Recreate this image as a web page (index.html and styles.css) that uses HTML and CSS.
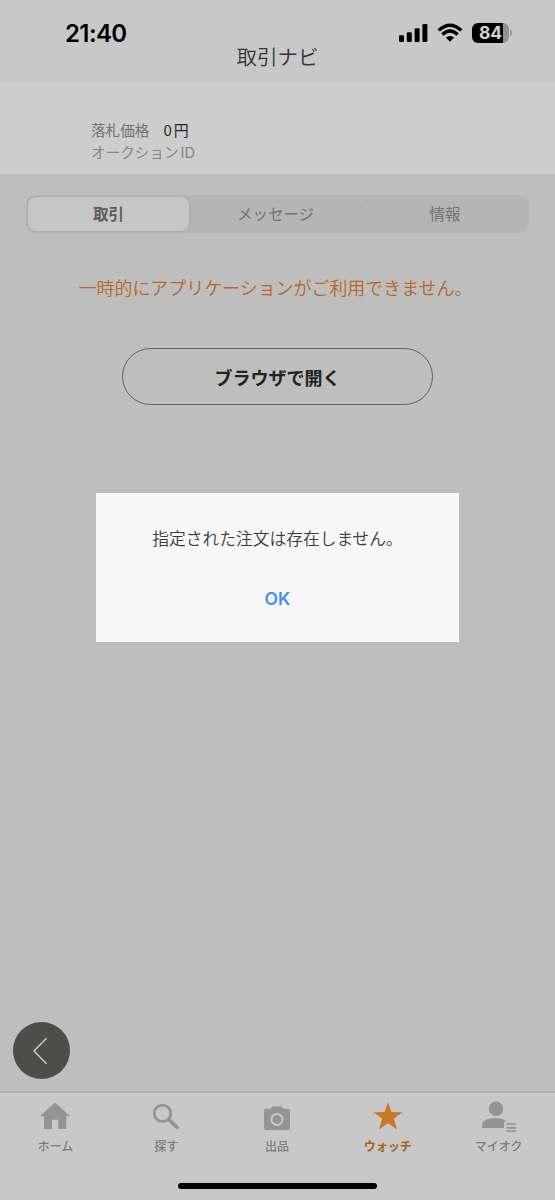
FILE: index.html
```html
<!DOCTYPE html>
<html lang="ja">
<head>
    <meta charset="UTF-8">
    <meta name="viewport" content="width=device-width, initial-scale=1.0">
    <title>取引ナビ</title>
    <link rel="stylesheet" href="styles.css">
</head>
<body>
    <header class="header">
        <div class="status-bar">
            <span class="time">21:40</span>
            <div class="status-icons">
                <svg class="signal" width="29" height="18" viewBox="0 0 29 18">
                    <rect x="0" y="11.3" width="5" height="6.7" rx="1.3"/>
                    <rect x="7.8" y="8.3" width="5" height="9.7" rx="1.3"/>
                    <rect x="15.6" y="4.3" width="5" height="13.7" rx="1.3"/>
                    <rect x="23.4" y="0" width="5" height="18" rx="1.3"/>
                </svg>
                <svg class="wifi" width="26" height="19" viewBox="0 0 26 19">
                    <path d="M1.6 7.4 Q13 -3.1 24.4 7.4" fill="none" stroke="#000" stroke-width="3.3"/>
                    <path d="M5.4 11.5 Q13 4.4 20.6 11.5" fill="none" stroke="#000" stroke-width="3.3"/>
                    <path d="M8.8 14.5 Q13 11.3 17.2 14.5 L13 18.7 Z"/>
                </svg>
                <div class="battery"><span>84</span></div>
                <span class="battery-cap"></span>
            </div>
        </div>
        <h1 class="title">取引ナビ</h1>
    </header>

    <section class="item-info">
        <p><span>落札価格</span><span class="price">0円</span></p>
        <p class="auction-id">オークション<span class="id-label">ID</span></p>
    </section>

    <main class="content">
        <div class="tabs">
            <button class="tab active">取引</button>
            <button class="tab">メッセージ</button>
            <button class="tab last">情報</button>
        </div>
        <p class="notice">一時的にアプリケーションがご利用できません。</p>
        <button class="browser-button">ブラウザで開く</button>
    </main>

    <nav class="navbar">
        <a class="nav-item">
            <svg width="36" height="32" viewBox="0 0 36 32">
                <path d="M18 2.5 L33.3 16.2 H29.2 V29 H21.3 V19.7 H15 V29 H7 V16.2 H2.8 Z"/>
            </svg>
            <span>ホーム</span>
        </a>
        <a class="nav-item">
            <svg width="36" height="32" viewBox="0 0 36 32">
                <circle cx="14.5" cy="13.4" r="8.3" fill="none" stroke="currentColor" stroke-width="2.8"/>
                <path d="M20.5 19.4 L30.2 28.5" stroke="currentColor" stroke-width="3.5"/>
            </svg>
            <span>探す</span>
        </a>
        <a class="nav-item">
            <svg width="36" height="32" viewBox="0 0 36 32">
                <path d="M7.2 8.8 H11.5 L13.5 6.5 H22.5 L24.5 8.8 H28.8 Q31 8.8 31 11 V27.8 Q31 30 28.8 30 H7.2 Q5 30 5 27.8 V11 Q5 8.8 7.2 8.8 Z"/>
                <circle class="lens" cx="18" cy="19.4" r="5.5"/>
            </svg>
            <span>出品</span>
        </a>
        <a class="nav-item selected">
            <svg width="36" height="32" viewBox="0 0 36 32">
                <path d="M18 2 L21.4 12.1 L32.5 12.3 L23.8 18.7 L27 29.5 L18 23.2 L9 29.5 L12.2 18.7 L3.5 12.3 L14.6 12.1 Z"/>
            </svg>
            <span>ウォッチ</span>
        </a>
        <a class="nav-item">
            <svg width="42" height="32" viewBox="0 0 42 32">
                <circle cx="18" cy="8.8" r="7.2"/>
                <path d="M4 28 V24.5 Q5.5 18.2 17 18 Q24.5 18 29 21.5 H26 V28 Z"/>
                <path d="M28.5 24 H38 M28.5 27.8 H38 M28.5 31.2 H38" stroke="currentColor" stroke-width="1.7"/>
            </svg>
            <span>マイオク</span>
        </a>
    </nav>

    <button class="back-button">
        <svg width="18" height="30" viewBox="0 0 18 30">
            <path d="M15.5 2.3 L3 15 L15.5 27.8" fill="none" stroke="#c8c8c4" stroke-width="1.5"/>
        </svg>
    </button>
    <div class="home-indicator"></div>

    <div class="dialog">
        <p class="dialog-message">指定された注文は存在しません。</p>
        <button class="dialog-ok">OK</button>
    </div>
</body>
</html>
```
FILE: styles.css
```css
:root {
    --bg-color: #bebebe;
    --bar-color: #c8c8c8;
    --panel-color: #cdcdcd;
    --text-color: #353535;
    --muted-color: #737373;
    --icon-color: #949494;
    --accent-color: #b96527;
}

* {
    box-sizing: border-box;
}

body {
    display: flex;
    flex-direction: column;
    height: 1200px;
    margin: 0;
    position: relative;
    font-family: "Noto Sans CJK JP", sans-serif;
    background-color: var(--bg-color);
    color: var(--text-color);
}

p, h1 {
    margin: 0;
}

button {
    padding: 0;
    border: none;
    background: none;
    font-family: inherit;
    cursor: pointer;
}

/* Header */
.header {
    height: 83px;
    background: var(--bar-color);
}

.status-bar {
    display: flex;
    justify-content: space-between;
    height: 43px;
    padding: 22px 43px 0 65px;
}

.time {
    font-family: Inter, sans-serif;
    font-size: 24px;
    font-weight: 600;
    line-height: 24px;
    letter-spacing: -0.6px;
    color: #000;
}

.status-icons {
    display: flex;
    align-items: flex-start;
}

.signal {
    margin-top: 2px;
}

.wifi {
    margin: 1px 9px 0 9px;
}

.battery {
    width: 37px;
    height: 20px;
    margin-top: 1px;
    border-radius: 6px;
    background: linear-gradient(to right, #000 84%, #929292 84%);
    font-family: Inter, sans-serif;
    font-size: 17.5px;
    font-weight: 700;
    line-height: 20px;
    text-align: center;
    color: #d4d4d4;
}

.battery-cap {
    width: 2px;
    height: 6px;
    margin: 8px 0 0 1px;
    border-radius: 0 3px 3px 0;
    background: #999;
}

.title {
    font-size: 20.5px;
    font-weight: 350;
    line-height: 27px;
    text-align: center;
}

/* Item info */
.item-info {
    height: 91px;
    padding: 36px 0 0 91px;
    background: var(--panel-color);
    font-size: 14.6px;
    line-height: 22px;
    color: #717171;
}

.price {
    margin-left: 14px;
    font-size: 15px;
    letter-spacing: 2px;
    color: #292929;
}

.auction-id {
    color: #858585;
}

.id-label {
    margin-left: 2px;
    font-family: Inter, sans-serif;
}

/* Content */
.content {
    display: flex;
    flex-direction: column;
    align-items: center;
    flex: 1;
    padding-top: 21px;
}

.tabs {
    display: grid;
    grid-template-columns: 164px 171px 168px;
    width: 503px;
    height: 38px;
    padding: 2px 0;
    border-radius: 9px;
    background: #b5b5b5;
}

.tab {
    padding-bottom: 2px;
    font-size: 15.5px;
    line-height: 32px;
    color: var(--muted-color);
}

.tab.active {
    margin: 0 1px 0 2px;
    border-radius: 8px;
    background: #c6c6c6;
    box-shadow: 0 0 3px rgba(0, 0, 0, 0.12);
    font-weight: 700;
    color: #5c5c5c;
}

.tab.last {
    background: linear-gradient(#acacac, #acacac) left center / 1px 20px no-repeat;
}

.notice {
    margin-top: 40px;
    padding-right: 4px;
    font-size: 17.95px;
    font-weight: 350;
    line-height: 28px;
    white-space: nowrap;
    color: var(--accent-color);
}

.browser-button {
    width: 311px;
    height: 57px;
    margin-top: 47px;
    border: 1px solid #626262;
    border-radius: 29px;
    font-size: 18px;
    font-weight: 700;
    color: #222;
}

/* Bottom navigation */
.navbar {
    display: grid;
    grid-template-columns: repeat(5, 1fr);
    height: 109px;
    padding: 7px 1px 0 0;
    border-top: 2px solid #b1b1b1;
    background: var(--bar-color);
}

.nav-item {
    display: flex;
    flex-direction: column;
    align-items: center;
    font-size: 12px;
    font-weight: 500;
    line-height: 18px;
    color: #7b7b7b;
}

.nav-item svg {
    margin-bottom: 5px;
    fill: currentColor;
    color: var(--icon-color);
}

.nav-item .lens {
    fill: none;
    stroke: var(--bar-color);
    stroke-width: 2;
}

.nav-item.selected {
    font-weight: 700;
    color: #a6631c;
}

.nav-item.selected svg {
    color: #c77b26;
}

/* Floating elements */
.back-button {
    position: absolute;
    left: 13px;
    bottom: 121px;
    display: flex;
    align-items: center;
    justify-content: center;
    width: 57px;
    height: 57px;
    padding-right: 4px;
    border-radius: 50%;
    background: #4d4d4b;
}

.home-indicator {
    position: absolute;
    left: 178px;
    bottom: 11px;
    width: 199px;
    height: 6px;
    border-radius: 3px;
    background: #000;
}

.dialog {
    position: absolute;
    top: 493px;
    left: 96px;
    display: flex;
    flex-direction: column;
    align-items: center;
    width: 363px;
    height: 149px;
    padding-top: 31px;
    background: #f7f7f7;
}

.dialog-message {
    font-size: 16.75px;
    font-weight: 350;
    line-height: 28px;
    white-space: nowrap;
    color: #3c3c3c;
}

.dialog-ok {
    margin-top: 35px;
    font-family: Inter, sans-serif;
    font-size: 17.5px;
    font-weight: 600;
    line-height: 24px;
    color: #438fee;
}
```
